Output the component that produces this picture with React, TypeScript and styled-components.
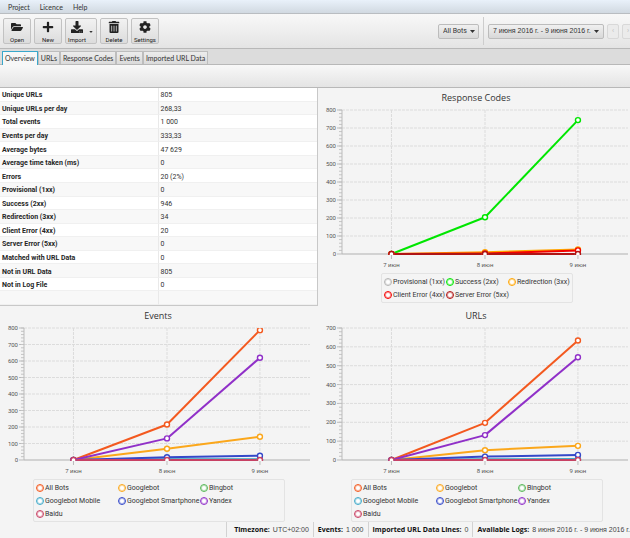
import React from 'react';
import styled, { createGlobalStyle } from 'styled-components';
import { FaFolderOpen, FaPlus, FaDownload, FaTrashAlt, FaCog } from 'react-icons/fa';

const GlobalStyle = createGlobalStyle`
  * { box-sizing: border-box; }
  body {
    margin: 0;
    background: #f4f4f4;
    color: #333;
    font: 7px/10px Roboto, "Noto Sans", sans-serif;
  }
  button, select { font: inherit; color: inherit; margin: 0; }
`;

const Window = styled.div`
  display: flex;
  flex-direction: column;
  min-height: 100vh;
  overflow: hidden;
`;

const MenuBar = styled.nav`
  display: flex;
  gap: 10px;
  height: 14px;
  padding: 1px 8px 0;
  align-items: center;
  border-bottom: 1px solid #b9bdc1;
  background: linear-gradient(#e9f1fa, #d1d9e1);
`;

const MenuButton = styled.button`
  padding: 0;
  border: 0;
  background: none;
  font-family: Lato, sans-serif;
  line-height: 12px;
`;

const Toolbar = styled.div`
  display: flex;
  height: 35px;
  padding: 4px 0 4px 3px;
  align-items: center;
  gap: 3px;
  border-bottom: 1px solid #b8b8b8;
  background: linear-gradient(#f8f8f8, #e4e4e4);
`;

const ToolButton = styled.button<{ $wide?: boolean }>`
  position: relative;
  display: flex;
  flex: none;
  flex-direction: column;
  width: ${(p) => (p.$wide ? 32 : 28)}px;
  height: 26px;
  padding: ${(p) => (p.$wide ? '2px 8px 0 0' : '2px 0 0')};
  align-items: center;
  gap: 3px;
  border: 1px solid #c2c2c2;
  border-radius: 2px;
  background: linear-gradient(#f2f2f2, #dcdcdc);
  font-size: 6px;
  line-height: 8px;
  color: #222;
  svg { flex: none; }
`;

const MenuCaret = styled.svg`
  position: absolute;
  right: 3px;
  top: 12px;
`;

const ToolbarEnd = styled.div`
  display: flex;
  align-items: center;
  gap: 3px;
  margin-left: auto;
  margin-right: -4px;
`;

const Divider = styled.span`
  width: 1px;
  height: 28px;
  margin: 0 1px;
  background: #cdcdcd;
`;

const SelectWrap = styled.label`
  position: relative;
  display: block;
  width: 41px;
`;

const Select = styled.select`
  display: block;
  appearance: none;
  width: 100%;
  height: 15px;
  padding: 0 10px 0 4px;
  border: 1px solid #bcbcbc;
  border-radius: 2px;
  background: linear-gradient(#f0f0f0, #d8d8d8);
`;

const SelectCaret = styled.svg`
  position: absolute;
  right: 4px;
  top: 6px;
  pointer-events: none;
`;

const DateButton = styled.button`
  display: flex;
  width: 116px;
  height: 15px;
  padding: 0 4px;
  align-items: center;
  justify-content: space-between;
  border: 1px solid #bcbcbc;
  border-radius: 2px;
  background: linear-gradient(#f0f0f0, #d8d8d8);
  font-family: "Liberation Sans", sans-serif;
  white-space: nowrap;
`;

const StepButton = styled.button`
  width: 12px;
  height: 15px;
  padding: 0;
  border: 1px solid #d8d8d8;
  border-radius: 2px;
  background: #ebebeb;
  color: #bbb;
`;

const TabBar = styled.div`
  display: flex;
  height: 16px;
  padding: 2px 2px 0;
  border-bottom: 1px solid #b8b8b8;
  background: #dcdcdc;
`;

const Tab = styled.button<{ $active?: boolean }>`
  height: ${(p) => (p.$active ? 14 : 13)}px;
  padding: ${(p) => (p.$active ? '0 2px 1px' : '0 2px')};
  border: 1px solid ${(p) => (p.$active ? '#39a7cb' : '#bdbdbd')};
  border-bottom: 0;
  border-radius: 1px 1px 0 0;
  background: ${(p) => (p.$active ? '#f7f7f7' : 'linear-gradient(#ececec, #dadada)')};
  font-family: Lato, sans-serif;
  line-height: 12px;
  white-space: nowrap;
`;

const FilterBar = styled.div`
  height: 23px;
  border-bottom: 1px solid #b8b8b8;
  background: linear-gradient(#f8f8f8, #e4e4e4);
`;

const Dashboard = styled.main`
  display: grid;
  flex: 1;
  grid-template-columns: 318fr 312fr;
  align-content: start;
`;

const SummaryTable = styled.table`
  width: 100%;
  height: 218px;
  table-layout: fixed;
  border-collapse: separate;
  border-spacing: 0;
  border: solid #c8c8c8;
  border-width: 0 1px 1px 0;
  background: #fff;
  tr:nth-child(even) { background: #f8f8f8; }
  th, td {
    padding: 2px 2px 0;
    border-bottom: 1px solid #f0f0f0;
    text-align: left;
    line-height: 10px;
  }
  th {
    width: 50%;
    border-right: 1px solid #e9e9e9;
    color: #262626;
  }
`;

const ChartPanel = styled.section<{ $end: number; $top: number }>`
  min-width: 0;
  padding: ${(p) => p.$top}px ${(p) => p.$end}px 0 24px;
`;

const ChartTitle = styled.h2`
  margin: 0 0 6px -18px;
  font: 400 9px/12px "Open Sans", "Noto Sans", sans-serif;
  text-align: center;
  color: #333;
`;

const Plot = styled.svg`
  display: block;
  width: 100%;
  overflow: visible;
  font-size: 6px;
  fill: #555;
`;

const Legend = styled.ul<{ $column: number; $shift: number }>`
  display: grid;
  grid-template-columns: repeat(3, ${(p) => p.$column}px);
  grid-auto-rows: 13px;
  width: fit-content;
  margin: 19px 0 0 ${(p) => p.$shift}px;
  padding: 1px 2px;
  list-style: none;
  border: 1px solid #e3e3e3;
  border-radius: 2px;
`;

const LegendItem = styled.li<{ $color: string }>`
  display: flex;
  align-items: center;
  gap: 1px;
  white-space: nowrap;
  &::before {
    content: "";
    flex: none;
    width: 6px;
    height: 6px;
    border: 1px solid ${(p) => p.$color};
    box-shadow: inset 0 0 0 1px ${(p) => p.$color}66;
    border-radius: 50%;
    background: #fff;
  }
`;

const StatusBar = styled.footer`
  display: flex;
  height: 16px;
  padding-bottom: 1px;
  justify-content: flex-end;
  white-space: nowrap;
`;

const StatusItem = styled.div<{ $inset?: number }>`
  display: flex;
  flex: none;
  align-items: center;
  gap: 3px;
  padding: 0 4px 0 ${(p) => p.$inset ?? 4}px;
  border-left: 1px solid #d2d2d2;
  strong {
    font-family: "Open Sans", sans-serif;
    color: #111;
  }
  span {
    font-family: "Liberation Sans", sans-serif;
    color: #444;
  }
  &:last-child { padding-right: 0; }
`;

interface Series {
  name: string;
  color: string;
  values: [number, number, number];
}

interface ChartProps {
  title: string;
  max: number;
  height: number;
  series: Series[];
  end: number;
  top: number;
  column: number;
  shift: number;
}

const POSITIONS = [17.3, 50, 82.5];
const DAYS = ['7 июн', '8 июн', '9 июн'];

function LineChart({ title, max, height, series, end, top, column, shift }: ChartProps) {
  const y = (v: number) => height - (v / max) * height;
  const majors = Array.from({ length: max / 100 + 1 }, (_, i) => i * 100);
  const minors = Array.from({ length: max / 20 }, (_, i) => i * 20 + 20);
  return (
    <ChartPanel $end={end} $top={top}>
      <ChartTitle>{title}</ChartTitle>
      <Plot height={height} role="img" aria-label={title}>
        {majors.map((v) => (
          <g key={v}>
            {v > 0 && <line x1="0" x2="100%" y1={y(v)} y2={y(v)} stroke="#dcdcdc" strokeDasharray="3 1" />}
            <line x1="-5" x2="0" y1={y(v)} y2={y(v)} stroke="#bbb" />
            <text x="-6" y={y(v) + 2} textAnchor="end">{v}</text>
          </g>
        ))}
        {minors.map((v) => (
          <line key={v} x1="-3" x2="0" y1={y(v)} y2={y(v)} stroke="#c4c4c4" />
        ))}
        {POSITIONS.map((x, i) => (
          <g key={x}>
            <line x1={`${x}%`} x2={`${x}%`} y1="0" y2={height} stroke="#dcdcdc" strokeDasharray="3 1" />
            <line x1={`${x}%`} x2={`${x}%`} y1={height} y2={height + 5} stroke="#bbb" />
            <text x={`${x}%`} y={height + 13} textAnchor="middle">{DAYS[i]}</text>
          </g>
        ))}
        <line x1="0" x2="0" y1="0" y2={height} stroke="#bbb" />
        <line x1="0" x2="100%" y1={height} y2={height} stroke="#b0b0b0" />
        <svg width="100%" height={height + 1} overflow="hidden">
          {series.map((s) => (
            <g key={s.name} stroke={s.color} strokeWidth="2">
              {[0, 1].map((i) => (
                <line
                  key={i}
                  x1={`${POSITIONS[i]}%`}
                  x2={`${POSITIONS[i + 1]}%`}
                  y1={y(s.values[i])}
                  y2={y(s.values[i + 1])}
                />
              ))}
            </g>
          ))}
          {series.map((s) => (
            <g key={s.name} stroke={s.color} strokeWidth="1.4" fill="#fff">
              {s.values.map((v, i) => (
                <circle key={i} cx={`${POSITIONS[i]}%`} cy={y(v)} r="2.5" />
              ))}
            </g>
          ))}
        </svg>
      </Plot>
      <Legend $column={column} $shift={shift}>
        {series.map((s) => (
          <LegendItem key={s.name} $color={s.color}>{s.name}</LegendItem>
        ))}
      </Legend>
    </ChartPanel>
  );
}

const SUMMARY = [
  ['Unique URLs', '805'],
  ['Unique URLs per day', '268,33'],
  ['Total events', '1 000'],
  ['Events per day', '333,33'],
  ['Average bytes', '47 629'],
  ['Average time taken (ms)', '0'],
  ['Errors', '20 (2%)'],
  ['Provisional (1xx)', '0'],
  ['Success (2xx)', '946'],
  ['Redirection (3xx)', '34'],
  ['Client Error (4xx)', '20'],
  ['Server Error (5xx)', '0'],
  ['Matched with URL Data', '0'],
  ['Not in URL Data', '805'],
  ['Not in Log File', '0'],
];

const CODES: Series[] = [
  { name: 'Provisional (1xx)', color: '#b4b4b4', values: [0, 0, 0] },
  { name: 'Success (2xx)', color: '#00e600', values: [0, 204, 744] },
  { name: 'Redirection (3xx)', color: '#ffa500', values: [0, 10, 25] },
  { name: 'Client Error (4xx)', color: '#f40000', values: [0, 3, 20] },
  { name: 'Server Error (5xx)', color: '#b01414', values: [0, 0, 0] },
];

const BOTS: [string, string][] = [
  ['All Bots', '#f3591f'],
  ['Googlebot', '#fba71b'],
  ['Bingbot', '#57b757'],
  ['Googlebot Mobile', '#41a9c9'],
  ['Googlebot Smartphone', '#3448c9'],
  ['Yandex', '#9030c8'],
  ['Baidu', '#c84164'],
];

const withValues = (values: [number, number, number][]): Series[] =>
  BOTS.map(([name, color], i) => ({ name, color, values: values[i] }));

const EVENTS = withValues([[0, 215, 787], [0, 68, 141], [0, 1, 1], [0, 4, 4], [0, 17, 26], [0, 131, 620], [0, 0, 0]]);
const URLS = withValues([[0, 197, 634], [0, 52, 75], [0, 1, 1], [0, 4, 5], [0, 18, 27], [0, 132, 545], [0, 0, 0]]);

const caret = <path d="M0 0h5L2.5 3z" fill="#333" />;

export default function App() {
  return (
    <>
      <GlobalStyle />
      <Window>
        <MenuBar>
          <MenuButton>Project</MenuButton>
          <MenuButton>Licence</MenuButton>
          <MenuButton>Help</MenuButton>
        </MenuBar>
        <Toolbar>
          <ToolButton><FaFolderOpen size={12} />Open</ToolButton>
          <ToolButton><FaPlus size={12} />New</ToolButton>
          <ToolButton $wide>
            <FaDownload size={12} />Import
            <MenuCaret width="4" height="2" viewBox="0 0 5 3">{caret}</MenuCaret>
          </ToolButton>
          <ToolButton><FaTrashAlt size={12} />Delete</ToolButton>
          <ToolButton><FaCog size={12} />Settings</ToolButton>
          <ToolbarEnd>
            <SelectWrap>
              <Select aria-label="Bot" defaultValue="All Bots">
                <option>All Bots</option>
              </Select>
              <SelectCaret width="5" height="3">{caret}</SelectCaret>
            </SelectWrap>
            <Divider />
            <DateButton>
              7 июня 2016 г. - 9 июня 2016 г.
              <svg width="5" height="3">{caret}</svg>
            </DateButton>
            <StepButton aria-label="Previous">‹</StepButton>
            <StepButton aria-label="Next">›</StepButton>
          </ToolbarEnd>
        </Toolbar>
        <TabBar role="tablist">
          <Tab role="tab" aria-selected $active>Overview</Tab>
          <Tab role="tab">URLs</Tab>
          <Tab role="tab">Response Codes</Tab>
          <Tab role="tab">Events</Tab>
          <Tab role="tab">Imported URL Data</Tab>
        </TabBar>
        <FilterBar />
        <Dashboard>
          <SummaryTable>
            <tbody>
              {SUMMARY.map(([label, value]) => (
                <tr key={label}>
                  <th scope="row">{label}</th>
                  <td>{value}</td>
                </tr>
              ))}
              <tr><th>&nbsp;</th><td /></tr>
            </tbody>
          </SummaryTable>
          <LineChart title="Response Codes" max={800} height={144} series={CODES} end={2} top={4} column={62} shift={39} />
          <LineChart title="Events" max={800} height={132} series={EVENTS} end={8} top={4} column={82} shift={9} />
          <LineChart title="URLs" max={700} height={132} series={URLS} end={2} top={4} column={82} shift={9} />
        </Dashboard>
        <StatusBar>
          <StatusItem $inset={7}><strong>Timezone:</strong><span>UTC+02:00</span></StatusItem>
          <StatusItem><strong>Events:</strong><span>1 000</span></StatusItem>
          <StatusItem><strong>Imported URL Data Lines:</strong><span>0</span></StatusItem>
          <StatusItem><strong>Available Logs:</strong><span>8 июня 2016 г. - 9 июня 2016 г.</span></StatusItem>
        </StatusBar>
      </Window>
    </>
  );
}
